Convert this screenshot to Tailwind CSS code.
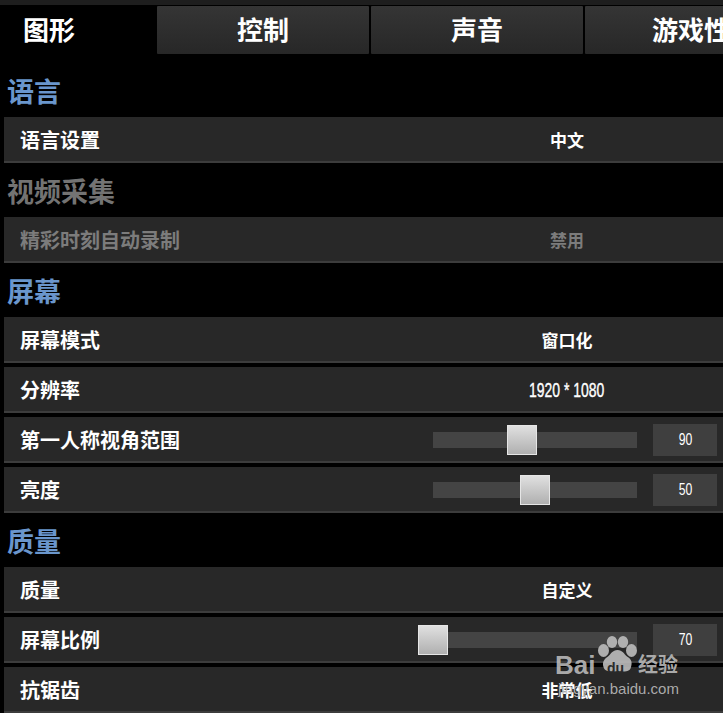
<!DOCTYPE html>
<html lang="zh-CN">
<head>
<meta charset="utf-8">
<script src="https://cdn.jsdelivr.net/npm/@tailwindcss/browser@4"></script>
</head>
<body class="bg-black">
<div class="relative w-[723px] h-[713px] overflow-hidden bg-black text-white font-['Noto_Sans_CJK_SC','Noto_Sans',sans-serif]">
  <div class="h-[5px] bg-[#1e1e1e]"></div>
  <div class="flex mt-px h-12 gap-0.5 w-[900px]">
    <div class="w-[157px] -mr-0.5 pl-[23px] flex items-center text-[26px] leading-[44px] pb-[3px] font-bold">图形</div>
    <div class="w-[212px] flex items-center justify-center text-[26px] leading-[44px] pb-[3px] font-bold rounded-[1px] bg-gradient-to-b from-[#353535] to-[#272727]">控制</div>
    <div class="w-[212px] flex items-center justify-center text-[26px] leading-[44px] pb-[3px] font-bold rounded-[1px] bg-gradient-to-b from-[#353535] to-[#272727]">声音</div>
    <div class="w-[212px] flex items-center justify-center text-[26px] leading-[44px] pb-[3px] font-bold rounded-[1px] bg-gradient-to-b from-[#353535] to-[#272727]">游戏性</div>
  </div>
  <div class="mt-[13px] pl-1 flex flex-col">
    <div class="h-[50px] flex items-center pb-0.5 pl-[3px] text-[27px] font-bold text-[#6a96cc]">语言</div>
    <div class="h-[46px] flex items-center bg-[#282828] border-b-2 border-[#3c3c3c] pl-4 pt-px text-[20px] font-bold">
      <span class="w-[412px]">语言设置</span><span class="w-[270px] text-center text-[17px]">中文</span>
    </div>

    <div class="mt-1 h-[50px] flex items-center pb-0.5 pl-[3px] text-[27px] font-bold text-[#737373]">视频采集</div>
    <div class="h-[46px] flex items-center bg-[#282828] border-b-2 border-[#3c3c3c] pl-4 pt-px text-[20px] font-bold text-[#7c7c7c]">
      <span class="w-[412px]">精彩时刻自动录制</span><span class="w-[270px] text-center text-[17px]">禁用</span>
    </div>

    <div class="mt-1 h-[50px] flex items-center pb-0.5 pl-[3px] text-[27px] font-bold text-[#6a96cc]">屏幕</div>
    <div class="flex flex-col gap-1">
      <div class="h-[46px] flex items-center bg-[#282828] border-b-2 border-[#3c3c3c] pl-4 pt-px text-[20px] font-bold">
        <span class="w-[412px]">屏幕模式</span><span class="w-[270px] text-center text-[17px]">窗口化</span>
      </div>
      <div class="h-[46px] flex items-center bg-[#282828] border-b-2 border-[#3c3c3c] pl-4 pt-px text-[20px] font-bold">
        <span class="w-[412px]">分辨率</span><span class="w-[270px] flex justify-center"><span class="inline-block whitespace-nowrap scale-x-[.665] text-[21px] leading-[28px] font-normal [-webkit-text-stroke:0.4px_white] font-['Liberation_Sans',sans-serif]">1920 * 1080</span></span>
      </div>
      <div class="h-[46px] flex items-center bg-[#282828] border-b-2 border-[#3c3c3c] pl-4 text-[20px] font-bold">
        <span class="w-[413px] shrink-0 pt-0.5">第一人称视角范围</span>
        <div class="relative top-px w-[204px] h-4 bg-[#444444] shrink-0"><div class="absolute left-[74px] -top-[7px] w-[30px] h-[30px] border border-[#e6e6e6] bg-gradient-to-b from-[#e0e0e0] to-[#b0b0b0]"></div></div>
        <div class="relative top-px ml-4 w-16 h-8 bg-[#3f3f3f] flex items-center justify-center"><span class="scale-x-[.72] text-[17px] font-normal font-['Liberation_Sans',sans-serif]">90</span></div>
      </div>
      <div class="h-[46px] flex items-center bg-[#282828] border-b-2 border-[#3c3c3c] pl-4 text-[20px] font-bold">
        <span class="w-[413px] shrink-0 pt-0.5">亮度</span>
        <div class="relative top-px w-[204px] h-4 bg-[#444444] shrink-0"><div class="absolute left-[87px] -top-[7px] w-[30px] h-[30px] border border-[#e6e6e6] bg-gradient-to-b from-[#e0e0e0] to-[#b0b0b0]"></div></div>
        <div class="relative top-px ml-4 w-16 h-8 bg-[#3f3f3f] flex items-center justify-center"><span class="scale-x-[.72] text-[17px] font-normal font-['Liberation_Sans',sans-serif]">50</span></div>
      </div>
    </div>

    <div class="mt-1 h-[50px] flex items-center pb-0.5 pl-[3px] text-[27px] font-bold text-[#6a96cc]">质量</div>
    <div class="flex flex-col gap-1">
      <div class="h-[46px] flex items-center bg-[#282828] border-b-2 border-[#3c3c3c] pl-4 pt-px text-[20px] font-bold">
        <span class="w-[412px]">质量</span><span class="w-[270px] text-center text-[17px]">自定义</span>
      </div>
      <div class="h-[46px] flex items-center bg-[#282828] border-b-2 border-[#3c3c3c] pl-4 text-[20px] font-bold">
        <span class="w-[413px] shrink-0 pt-0.5">屏幕比例</span>
        <div class="relative top-px w-[204px] h-4 bg-[#444444] shrink-0"><div class="absolute -left-[15px] -top-[7px] w-[30px] h-[30px] border border-[#e6e6e6] bg-gradient-to-b from-[#e0e0e0] to-[#b0b0b0]"></div></div>
        <div class="relative top-px ml-4 w-16 h-8 bg-[#3f3f3f] flex items-center justify-center"><span class="scale-x-[.72] text-[17px] font-normal font-['Liberation_Sans',sans-serif]">70</span></div>
      </div>
      <div class="h-[46px] flex items-center bg-[#282828] border-b-2 border-[#3c3c3c] pl-4 pt-px text-[20px] font-bold">
        <span class="w-[412px]">抗锯齿</span><span class="w-[270px] text-center text-[17px]">非常低</span>
      </div>
    </div>
  </div>

  <!-- watermark -->
  <div class="absolute left-[555px] top-[634px] w-[130px] h-[62px] text-[#bcbcbc]/90">
    <svg class="absolute left-[43px] top-[2px] w-[39px] h-[38px]" viewBox="0 0 39 38" fill="currentColor">
      <ellipse cx="5.500" cy="14.500" rx="5.500" ry="6.500"/>
      <ellipse cx="14" cy="6" rx="5.200" ry="6"/>
      <ellipse cx="25" cy="6" rx="5.200" ry="6"/>
      <ellipse cx="33.500" cy="14.500" rx="5.500" ry="6.500"/>
      <path d="M19.500 14c-5 0-6.500 4-9.500 6.500-4 2.500-6 6-4.500 10.500 1.500 5 7 5 14 4 7 1 12.500 1 13.500-4 1.500-4.500 .5-8-4-10.500-3-2.500-4.500-6.500-9.500-6.500z"/>
    </svg>
    <span class="absolute left-0 top-[18px] text-[26px] leading-[26px] font-bold font-['Liberation_Sans',sans-serif]">Bai</span>
    <span class="absolute left-[52px] top-[27px] text-[14px] leading-[14px] font-bold text-[#2a2a2a] font-['Liberation_Sans',sans-serif]">du</span>
    <span class="absolute left-[83px] top-[18px] text-[20px] leading-[24px] font-bold">经验</span>
    <span class="absolute left-[3px] top-[46px] text-[15px] leading-[18px] font-['Liberation_Sans',sans-serif]">jingyan.baidu.com</span>
  </div>
</div>
</body>
</html>
